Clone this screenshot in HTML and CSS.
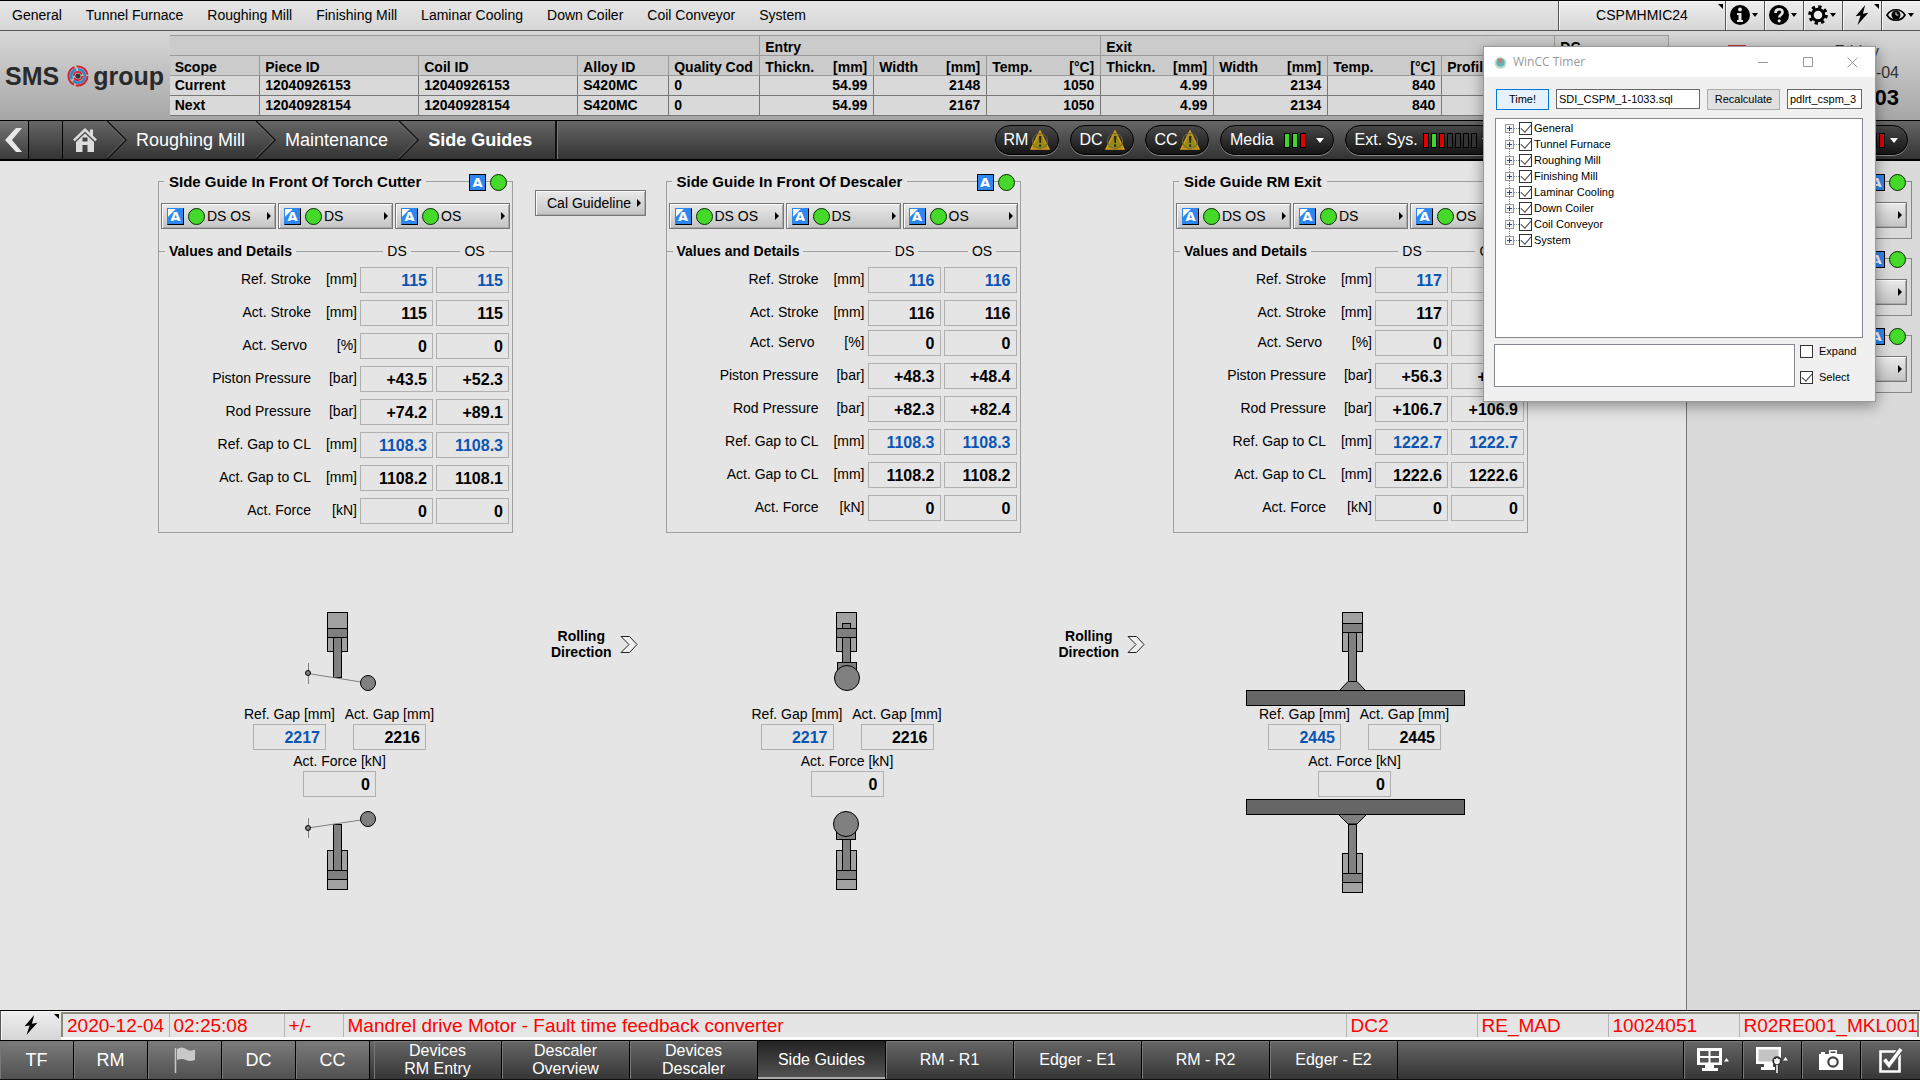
FILE: index.html
```html
<!DOCTYPE html>
<html lang="en">
<head>
<meta charset="utf-8">
<title>Side Guides</title>
<link rel="stylesheet" href="styles.css">
</head>
<body>
<svg class="defs" aria-hidden="true">
  <symbol id="warn" viewBox="0 0 20 20"><path d="M10 1 19 19H1Z" fill="#958c16" stroke="#e09a1c" stroke-width="1.4"/><circle cx="10" cy="11" r="7.5" fill="none" stroke="#6e6a3a"/><path d="M9 6h2.4l-.4 7H9.400Z M9 14.500h2.200v2.200H9Z" fill="#2c2a10"/></symbol>
  <symbol id="bolt" viewBox="0 0 16 22"><path d="M11.500 0 1 12.500 6.500 11.500 3 22 15 8.500 9 9.500Z" fill="#000"/></symbol>
  <symbol id="sep" viewBox="0 0 20 38"><path d="M0 0 19 19 0 38" fill="none" stroke="#111" stroke-width="1.500"/><path d="M-1.500 0 17.500 19-1.500 38" fill="none" stroke="#777" stroke-width=".8"/></symbol>
</svg>

<header class="menubar">
  <nav class="menu">
    <a href="#">General</a><a href="#">Tunnel Furnace</a><a href="#">Roughing Mill</a><a href="#">Finishing Mill</a><a href="#">Laminar Cooling</a><a href="#">Down Coiler</a><a href="#">Coil Conveyor</a><a href="#">System</a>
  </nav>
  <button class="tool station-name corner">CSPMHMIC24</button>
  <button class="tool drop" aria-label="Info"><svg width="20" height="20" viewBox="0 0 20 20"><circle cx="10" cy="10" r="10"/><circle cx="10" cy="4.500" r="1.900" fill="#e5e5e5"/><path d="M7 8h4.500v7H13v2H7v-2h1.500v-5H7Z" fill="#e5e5e5"/></svg></button>
  <button class="tool drop" aria-label="Help"><svg width="20" height="20" viewBox="0 0 20 20"><circle cx="10" cy="10" r="10"/><path d="M6.500 8C6.500 3 14 3.200 13.500 7.500 13.300 9.500 10.300 10 10.200 12.500" fill="none" stroke="#e5e5e5" stroke-width="2.600"/><circle cx="10.200" cy="15.800" r="1.600" fill="#e5e5e5"/></svg></button>
  <button class="tool drop" aria-label="Settings"><svg width="20" height="20" viewBox="0 0 20 20"><circle cx="10" cy="10" r="8.300" fill="none" stroke="#000" stroke-width="3" stroke-dasharray="3.260 3.260"/><circle cx="10" cy="10" r="5.800" fill="#eee" stroke="#000" stroke-width="3"/></svg></button>
  <button class="tool corner" aria-label="Alarms"><svg width="16" height="20"><use href="#bolt"/></svg></button>
  <button class="tool drop" aria-label="View"><svg width="20" height="16" viewBox="0 0 20 16"><path d="M1 8C5 1 15 1 19 8 15 15 5 15 1 8Z" fill="none" stroke="#000" stroke-width="1.700"/><circle cx="10" cy="8" r="4.500"/><path d="M10 5v3h2.500" fill="none" stroke="#ddd"/></svg></button>
</header>

<section class="product">
  <div class="logo"><span>SMS</span>
    <svg width="22" height="22" viewBox="0 0 22 22" fill="none"><circle cx="11" cy="11" r="9.500" stroke="#d6202c" stroke-width="2" stroke-dasharray="17 2 22 2 15 2"/><circle cx="11" cy="11" r="6.800" stroke="#2f86c6" stroke-width="2.600" stroke-dasharray="16 2 12 2"/><circle cx="11" cy="11" r="4.200" stroke="#d6202c" stroke-width="1.800" stroke-dasharray="11 2"/><circle cx="11" cy="11" r="2.600" fill="#333"/></svg>
    <span>group</span></div>
  <table class="pieces">
    <colgroup><col class="c90"><col class="c159"><col class="c159"><col class="c91"><col class="c91"><col class="c114"><col class="c113"><col class="c114"><col class="c113"><col class="c114"><col class="c114"><col class="c113"><col class="c114"></colgroup>
    <thead>
      <tr class="groups"><th colspan="5"></th><th colspan="3">Entry</th><th colspan="4">Exit</th><th>DC</th></tr>
      <tr><th>Scope</th><th>Piece ID</th><th>Coil ID</th><th>Alloy ID</th><th><div class="clip">Quality Code</div></th>
        <th><div class="pair"><span>Thickn.</span><span>[mm]</span></div></th><th><div class="pair"><span>Width</span><span>[mm]</span></div></th><th><div class="pair"><span>Temp.</span><span>[°C]</span></div></th>
        <th><div class="pair"><span>Thickn.</span><span>[mm]</span></div></th><th><div class="pair"><span>Width</span><span>[mm]</span></div></th><th><div class="pair"><span>Temp.</span><span>[°C]</span></div></th>
        <th>Profile</th><th></th></tr>
    </thead>
    <tbody>
      <tr><th>Current</th><td>12040926153</td><td>12040926153</td><td>S420MC</td><td>0</td><td class="num">54.99</td><td class="num">2148</td><td class="num">1050</td><td class="num">4.99</td><td class="num">2134</td><td class="num">840</td><td></td><td></td></tr>
      <tr><th>Next</th><td>12040928154</td><td>12040928154</td><td>S420MC</td><td>0</td><td class="num">54.99</td><td class="num">2167</td><td class="num">1050</td><td class="num">4.99</td><td class="num">2134</td><td class="num">840</td><td></td><td></td></tr>
    </tbody>
  </table>
  <div class="clock"><i class="flag"></i><div class="when"><div class="day">Friday</div><div class="date">2020-12-04</div><div class="time">:03</div></div></div>
</section>

<nav class="crumbs">
  <button class="back" aria-label="Back"><svg width="20" height="26" viewBox="0 0 20 26"><path d="M18 1H12L1 13 12 25H18L8 13Z" fill="#e8e8e8"/></svg></button>
  <span class="gap"></span>
  <a class="home" href="#" aria-label="Home"><svg width="26" height="26" viewBox="0 0 26 26" fill="#dcdcdc"><path d="M13 1 1 12.500 2.800 14.200 13 4.500 23.200 14.200 25 12.500 21 8.700V2.500H18V5.800Z"/><path d="M13 6.500 4 15V25H10.500V18H15.500V25H22V15Z"/><path d="M10.500 10.500h5v4h-5Z" fill="#444"/></svg></a>
  <svg class="sep" width="20" height="38"><use href="#sep"/></svg>
  <a href="#">Roughing Mill</a>
  <svg class="sep" width="20" height="38"><use href="#sep"/></svg>
  <a href="#">Maintenance</a>
  <svg class="sep" width="20" height="38"><use href="#sep"/></svg>
  <a href="#" class="here">Side Guides</a>
  <div class="status">
    <button class="pill">RM<svg width="20" height="20"><use href="#warn"/></svg></button>
    <button class="pill">DC<svg width="20" height="20"><use href="#warn"/></svg></button>
    <button class="pill">CC<svg width="20" height="20"><use href="#warn"/></svg></button>
    <button class="pill wide">Media<span class="bars"><i class="g"></i><i class="g"></i><i class="r"></i></span></button>
    <button class="pill wide">Ext. Sys.<span class="bars"><i class="r"></i><i class="g"></i><i class="r"></i><i></i><i></i><i></i><i></i></span></button>
    <button class="pill wide last" aria-label="Status"><span class="bars"><i class="r"></i><i class="r"></i><i class="r"></i></span></button>
  </div>
</nav>

<main class="screen">
  <div class="guides">
    <section class="panel">
      <header class="bar"><h2>SIde Guide In Front Of Torch Cutter</h2><span class="auto">A</span><i class="lamp"></i></header>
      <div class="modes"><button class="mode"><span class="auto cut">A</span><i class="lamp"></i>DS OS</button><button class="mode"><span class="auto cut">A</span><i class="lamp"></i>DS</button><button class="mode"><span class="auto cut">A</span><i class="lamp"></i>OS</button></div>
      <table class="values">
        <colgroup><col class="v-name"><col class="v-unit"><col class="v-ds"><col class="v-os"></colgroup>
        <thead><tr><th colspan="2"><span>Values and Details</span></th><th><span>DS</span></th><th><span>OS</span></th></tr></thead>
        <tbody>
          <tr class="ref"><th>Ref. Stroke</th><td>[mm]</td><td><output>115</output></td><td><output>115</output></td></tr>
          <tr><th>Act. Stroke</th><td>[mm]</td><td><output>115</output></td><td><output>115</output></td></tr>
          <tr><th>Act. Servo&nbsp;</th><td>[%]</td><td><output>0</output></td><td><output>0</output></td></tr>
          <tr><th>Piston Pressure</th><td>[bar]</td><td><output>+43.5</output></td><td><output>+52.3</output></td></tr>
          <tr><th>Rod Pressure</th><td>[bar]</td><td><output>+74.2</output></td><td><output>+89.1</output></td></tr>
          <tr class="ref"><th>Ref. Gap to CL</th><td>[mm]</td><td><output>1108.3</output></td><td><output>1108.3</output></td></tr>
          <tr><th>Act. Gap to CL</th><td>[mm]</td><td><output>1108.2</output></td><td><output>1108.1</output></td></tr>
          <tr><th>Act. Force</th><td>[kN]</td><td><output>0</output></td><td><output>0</output></td></tr>
        </tbody>
      </table>
    </section>
    <div class="between"><button class="mode cal">Cal Guideline</button></div>
    <section class="panel">
      <header class="bar"><h2>Side Guide In Front Of Descaler</h2><span class="auto">A</span><i class="lamp"></i></header>
      <div class="modes"><button class="mode"><span class="auto cut">A</span><i class="lamp"></i>DS OS</button><button class="mode"><span class="auto cut">A</span><i class="lamp"></i>DS</button><button class="mode"><span class="auto cut">A</span><i class="lamp"></i>OS</button></div>
      <table class="values">
        <colgroup><col class="v-name"><col class="v-unit"><col class="v-ds"><col class="v-os"></colgroup>
        <thead><tr><th colspan="2"><span>Values and Details</span></th><th><span>DS</span></th><th><span>OS</span></th></tr></thead>
        <tbody>
          <tr class="ref"><th>Ref. Stroke</th><td>[mm]</td><td><output>116</output></td><td><output>116</output></td></tr>
          <tr class="tight"><th>Act. Stroke</th><td>[mm]</td><td><output>116</output></td><td><output>116</output></td></tr>
          <tr><th>Act. Servo&nbsp;</th><td>[%]</td><td><output>0</output></td><td><output>0</output></td></tr>
          <tr><th>Piston Pressure</th><td>[bar]</td><td><output>+48.3</output></td><td><output>+48.4</output></td></tr>
          <tr><th>Rod Pressure</th><td>[bar]</td><td><output>+82.3</output></td><td><output>+82.4</output></td></tr>
          <tr class="ref"><th>Ref. Gap to CL</th><td>[mm]</td><td><output>1108.3</output></td><td><output>1108.3</output></td></tr>
          <tr><th>Act. Gap to CL</th><td>[mm]</td><td><output>1108.2</output></td><td><output>1108.2</output></td></tr>
          <tr><th>Act. Force</th><td>[kN]</td><td><output>0</output></td><td><output>0</output></td></tr>
        </tbody>
      </table>
    </section>
    <div class="between"></div>
    <section class="panel">
      <header class="bar"><h2>Side Guide RM Exit</h2><span class="auto">A</span><i class="lamp"></i></header>
      <div class="modes"><button class="mode"><span class="auto cut">A</span><i class="lamp"></i>DS OS</button><button class="mode"><span class="auto cut">A</span><i class="lamp"></i>DS</button><button class="mode"><span class="auto cut">A</span><i class="lamp"></i>OS</button></div>
      <table class="values">
        <colgroup><col class="v-name"><col class="v-unit"><col class="v-ds"><col class="v-os"></colgroup>
        <thead><tr><th colspan="2"><span>Values and Details</span></th><th><span>DS</span></th><th><span>OS</span></th></tr></thead>
        <tbody>
          <tr class="ref"><th>Ref. Stroke</th><td>[mm]</td><td><output>117</output></td><td><output></output></td></tr>
          <tr class="tight"><th>Act. Stroke</th><td>[mm]</td><td><output>117</output></td><td><output></output></td></tr>
          <tr><th>Act. Servo&nbsp;</th><td>[%]</td><td><output>0</output></td><td><output></output></td></tr>
          <tr><th>Piston Pressure</th><td>[bar]</td><td><output>+56.3</output></td><td><output>+56.5</output></td></tr>
          <tr><th>Rod Pressure</th><td>[bar]</td><td><output>+106.7</output></td><td><output>+106.9</output></td></tr>
          <tr class="ref"><th>Ref. Gap to CL</th><td>[mm]</td><td><output>1222.7</output></td><td><output>1222.7</output></td></tr>
          <tr><th>Act. Gap to CL</th><td>[mm]</td><td><output>1222.6</output></td><td><output>1222.6</output></td></tr>
          <tr><th>Act. Force</th><td>[kN]</td><td><output>0</output></td><td><output>0</output></td></tr>
        </tbody>
      </table>
    </section>

    <section class="rig">
      <svg width="355" height="96" viewBox="0 0 355 96" fill="#808080" stroke="#000" shape-rendering="crispEdges"><rect x="169.500" y="2.500" width="20" height="39" fill="#a2a2a2"/><rect x="169.500" y="18.500" width="20" height="9"/><rect x="175.500" y="27.500" width="8" height="40"/><path d="M150.500 53v21" stroke="#808080"/><g shape-rendering="auto"><path d="M150 63.500 203 72" stroke="#808080"/><circle cx="150" cy="63" r="2.500"/><circle cx="210" cy="73" r="7.500"/></g></svg>
      <div class="gaps"><div class="gap-box ref"><span>Ref. Gap [mm]</span><output>2217</output></div><div class="gap-box"><span>Act. Gap [mm]</span><output>2216</output></div></div>
      <div class="gap-box force"><span>Act. Force [kN]</span><output>0</output></div>
      <svg width="355" height="97" viewBox="0 0 355 97" fill="#808080" stroke="#000" shape-rendering="crispEdges"><rect x="169.500" y="53.500" width="20" height="39" fill="#a2a2a2"/><rect x="169.500" y="73.500" width="20" height="9"/><rect x="175.500" y="27.500" width="8" height="46"/><path d="M150.500 21v20" stroke="#808080"/><g shape-rendering="auto"><path d="M150 31 203 23" stroke="#808080"/><circle cx="150" cy="31" r="2.500"/><circle cx="210" cy="22" r="7.500"/></g></svg>
    </section>
    <div class="rolling"><p>Rolling<br>Direction</p><svg width="18" height="19" viewBox="0 0 18 19"><path d="M1 1.500h8.500L17 9.500 9.500 17.500H1L9 9.500Z" fill="#eee" stroke="#222"/></svg></div>
    <section class="rig">
      <svg width="355" height="96" viewBox="0 0 355 96" fill="#808080" stroke="#000" shape-rendering="crispEdges"><rect x="170.500" y="2.500" width="20" height="39" fill="#a2a2a2"/><rect x="176.500" y="13.500" width="8" height="5"/><rect x="170.500" y="18.500" width="20" height="9"/><rect x="176.500" y="27.500" width="8" height="25"/><rect x="171.500" y="52.500" width="19" height="10"/><circle cx="181" cy="68" r="12.500" shape-rendering="auto"/></svg>
      <div class="gaps"><div class="gap-box ref"><span>Ref. Gap [mm]</span><output>2217</output></div><div class="gap-box"><span>Act. Gap [mm]</span><output>2216</output></div></div>
      <div class="gap-box force"><span>Act. Force [kN]</span><output>0</output></div>
      <svg width="355" height="97" viewBox="0 0 355 97" fill="#808080" stroke="#000" shape-rendering="crispEdges"><rect x="170.500" y="53.500" width="20" height="39" fill="#a2a2a2"/><rect x="170.500" y="73.500" width="20" height="9"/><rect x="176.500" y="42.500" width="8" height="31"/><rect x="170.500" y="33.500" width="19" height="9"/><circle cx="180" cy="27" r="12.500" shape-rendering="auto"/></svg>
    </section>
    <div class="rolling"><p>Rolling<br>Direction</p><svg width="18" height="19" viewBox="0 0 18 19"><path d="M1 1.500h8.500L17 9.500 9.500 17.500H1L9 9.500Z" fill="#eee" stroke="#222"/></svg></div>
    <section class="rig">
      <svg width="355" height="96" viewBox="0 0 355 96" fill="#808080" stroke="#000" shape-rendering="crispEdges"><rect x="169.500" y="2.500" width="20" height="39" fill="#a2a2a2"/><rect x="169.500" y="13.500" width="20" height="9"/><rect x="175.500" y="22.500" width="8" height="49"/><path d="M166 81 175 71.500H184L193 81Z" shape-rendering="auto"/><rect x="73.500" y="80.500" width="218" height="15" fill="#666"/></svg>
      <div class="gaps"><div class="gap-box ref"><span>Ref. Gap [mm]</span><output>2445</output></div><div class="gap-box"><span>Act. Gap [mm]</span><output>2445</output></div></div>
      <div class="gap-box force"><span>Act. Force [kN]</span><output>0</output></div>
      <svg width="355" height="97" viewBox="0 0 355 97" fill="#808080" stroke="#000" shape-rendering="crispEdges"><path d="M165 17 175 27H184L194 17Z" shape-rendering="auto"/><rect x="73.500" y="2.500" width="218" height="15" fill="#666"/><rect x="169.500" y="56.500" width="20" height="39" fill="#a2a2a2"/><rect x="169.500" y="76.500" width="20" height="9"/><rect x="175.500" y="27.500" width="8" height="49"/></svg>
    </section>
  </div>
  <aside class="side">
    <section class="panel"><header class="bar"><span class="auto">A</span><i class="lamp"></i></header><button class="mode" aria-label="Open first group"></button></section>
    <section class="panel"><header class="bar"><span class="auto">A</span><i class="lamp"></i></header><button class="mode" aria-label="Open second group"></button></section>
    <section class="panel"><header class="bar"><span class="auto">A</span><i class="lamp"></i></header><button class="mode" aria-label="Open third group"></button></section>
  </aside>
</main>

<section class="alarm">
  <button class="tool corner" aria-label="Acknowledge"><svg width="16" height="20"><use href="#bolt"/></svg></button>
  <table>
    <colgroup><col class="a107"><col class="a115"><col class="a59"><col><col class="a131"><col class="a131"><col class="a131"><col class="a178"></colgroup>
    <tr><td>2020-12-04</td><td>02:25:08</td><td>+/-</td><td>Mandrel drive Motor - Fault time feedback converter</td><td>DC2</td><td>RE_MAD</td><td>10024051</td><td>R02RE001_MKL001</td></tr>
  </table>
</section>

<nav class="tabs">
  <button class="area">TF</button><button class="area">RM</button><button class="area" aria-label="Flag"><svg width="22" height="26" viewBox="0 0 22 26"><path d="M1.500 1v25" stroke="#c8c8c8" stroke-width="1.500"/><path d="M3 2Q8-1 12 2T21 2.500V13Q16 15 12 13T3 13Z" fill="#c8c8c8"/></svg></button><button class="area">DC</button><button class="area">CC</button>
  <button class="page first">Devices<br>RM Entry</button><button class="page">Descaler<br>Overview</button><button class="page">Devices<br>Descaler</button><button class="page on">Side Guides</button><button class="page">RM - R1</button><button class="page">Edger - E1</button><button class="page">RM - R2</button><button class="page">Edger - E2</button>
  <span class="fill"></span>
  <button class="act" aria-label="Windows"><svg width="34" height="26" viewBox="0 0 34 26"><path d="M1 1h25v17H1Z M9 18h9v3h4v3H6v-3h3Z" fill="#fff"/><path d="M4 4h8.500v5H4Z M14.500 4H23v5h-8.500Z M4 11h8.500v4.500H4Z M14.500 11H23v4.500h-8.500Z" fill="#555"/><path d="M28 14.500 30.500 11 33 14.500Z" fill="#fff"/></svg></button>
  <button class="act" aria-label="Screen service"><svg width="34" height="28" viewBox="0 0 34 28"><path d="M1 1h25v17H1Z M9 18h9v3h4v3H6v-3h3Z" fill="#fff"/><path d="M3.500 3.500h20v12h-20Z" fill="#c4c4c4"/><circle cx="22" cy="15" r="3.500" fill="none" stroke="#333" stroke-width="2.500"/><path d="M22 19v7" stroke="#333" stroke-width="4"/><path d="M22 12v3M22 19v8M20 13v3q2 3 4 0v-3" stroke="#fff" fill="none" stroke-width="1.500"/><path d="M28 14.500 30.500 11 33 14.500Z" fill="#fff"/></svg></button>
  <button class="act" aria-label="Camera"><svg width="26" height="22" viewBox="0 0 26 22"><path d="M1 5h2V3h4v2h4V1h8v4h6v16H1Z" fill="#fff"/><circle cx="15" cy="13" r="4.700" fill="none" stroke="#444" stroke-width="2.200"/><path d="M12.500 2.500h5v1.500h-5Z" fill="#444"/></svg></button>
  <button class="act" aria-label="Confirm"><svg width="26" height="26" viewBox="0 0 26 26"><path d="M2.500 4.500H21.500V24.500H2.500Z" fill="none" stroke="#fff" stroke-width="2.600"/><path d="M6 12 11 18 23 2" fill="none" stroke="#555" stroke-width="6"/><path d="M6.500 12.500 11 18 23 2" fill="none" stroke="#fff" stroke-width="3.600"/></svg></button>
</nav>

<div class="dialog" role="dialog" aria-label="WinCC Timer">
  <div class="title"><svg width="13" height="13" viewBox="0 0 13 13"><circle cx="6.500" cy="7" r="6" fill="#c9dccb"/><circle cx="6.500" cy="6.500" r="4.300" fill="#5bb5b8"/><path d="M3 2.500 8 3 7 8Z" fill="#d96b5b"/></svg><span>WinCC Timer</span>
    <button aria-label="Minimize"><svg width="10" height="10"><path d="M0 5.500h10" stroke="#999"/></svg></button><button aria-label="Maximize"><svg width="10" height="10"><path d="M.5.5h9v9h-9Z" fill="none" stroke="#999"/></svg></button><button aria-label="Close"><svg width="11" height="11"><path d="M.5.5l10 10M10.500.5l-10 10" stroke="#999"/></svg></button></div>
  <div class="dbody">
    <div class="drow"><button class="win default">Time!</button><input class="file" type="text" aria-label="File" value="SDI_CSPM_1-1033.sql"><button class="win calc">Recalculate</button><input class="host" type="text" aria-label="Server" value="pdlrt_cspm_3"></div>
    <ul class="tree">
      <li><button aria-label="Expand General"></button><label><input type="checkbox" checked>General</label></li>
      <li><button aria-label="Expand Tunnel Furnace"></button><label><input type="checkbox" checked>Tunnel Furnace</label></li>
      <li><button aria-label="Expand Roughing Mill"></button><label><input type="checkbox" checked>Roughing Mill</label></li>
      <li><button aria-label="Expand Finishing Mill"></button><label><input type="checkbox" checked>Finishing Mill</label></li>
      <li><button aria-label="Expand Laminar Cooling"></button><label><input type="checkbox" checked>Laminar Cooling</label></li>
      <li><button aria-label="Expand Down Coiler"></button><label><input type="checkbox" checked>Down Coiler</label></li>
      <li><button aria-label="Expand Coil Conveyor"></button><label><input type="checkbox" checked>Coil Conveyor</label></li>
      <li><button aria-label="Expand System"></button><label><input type="checkbox" checked>System</label></li>
    </ul>
    <div class="foot"><textarea aria-label="Output"></textarea><div class="opts"><label><input type="checkbox">Expand</label><label><input type="checkbox" checked>Select</label></div></div>
  </div>
</div>
</body>
</html>
```
FILE: styles.css
```css
* { box-sizing: border-box; }
body {
  margin: 0;
  min-height: 100vh;
  position: relative;
  display: flex;
  flex-direction: column;
  overflow-x: hidden;
  background: #e5e5e5;
  color: #000;
  font: 14px/16px "Liberation Sans", Arial, sans-serif;
}
button, input, textarea { font: inherit; color: inherit; margin: 0; padding: 0; border-radius: 0; }
a { color: inherit; text-decoration: none; }
h2, p, ul { margin: 0; padding: 0; }
h2 { font-size: 15px; line-height: 16px; }
svg { flex: none; display: block; }
.defs { display: none; }

/* menu bar */
.menubar {
  height: 31px;
  display: flex;
  border-top: 1px solid #000;
  border-bottom: 1px solid #555;
  background: linear-gradient(#e6e6e6, #d6d6d6);
}
.menu { flex: 1; display: flex; align-items: center; gap: 24px; padding-left: 12px; padding-bottom: 1px; white-space: nowrap; }
.tool {
  position: relative;
  width: 39px;
  display: flex;
  align-items: center;
  justify-content: center;
  padding-bottom: 1px;
  border: 0;
  border-left: 1px solid #555;
  box-shadow: inset 1px 1px #f6f6f6;
  background: linear-gradient(#eee, #d6d6d6);
}
.station-name { width: 167px; }
.drop { justify-content: flex-start; padding-left: 4px; }
.drop::after { content: ""; border: 3px solid transparent; border-top: 4px solid #000; border-bottom: 0; margin-left: 2px; }
.corner::after { content: ""; position: absolute; top: 3px; right: 2px; border-top: 5px solid #000; border-left: 5px solid transparent; }

/* product data */
.product { height: 89px; display: flex; background: linear-gradient(#d8d8d8, #a6a6a6); }
.logo { width: 170px; display: flex; align-items: center; gap: 4px; padding-left: 5px; font-size: 25px; font-weight: bold; color: #2a2a2a; }
.logo svg { margin-left: 4px; }
.pieces { width: calc(100% - 421px); align-self: flex-start; margin-top: 4px; table-layout: fixed; border-collapse: collapse; font-weight: bold; background: #d9d9d9; border-top: 1px solid #777; border-bottom: 1px solid #777; }
.pieces tr { height: 20px; }
.pieces th, .pieces td { padding: 0 6px 2px 5px; border: 1px solid #777; text-align: left; vertical-align: middle; white-space: nowrap; overflow: hidden; line-height: 16px; }
.pieces tr > :first-child { border-left: 0; }
.pieces thead th { padding-bottom: 0; background: #cbcbcb; border-color: #999; vertical-align: bottom; }
.pieces .num { text-align: right; }
.clip { overflow: hidden; }
.pair { display: flex; justify-content: space-between; }
.c90 { width: 90px; } .c91 { width: 91px; } .c113 { width: 113px; } .c114 { width: 114px; } .c159 { width: 159px; }
.clock { width: 251px; display: flex; justify-content: space-between; padding: 12px 21px 0 59px; }
.flag { width: 18px; height: 12px; margin-top: 2px; background: #c33; }
.when { text-align: right; color: #333; font-size: 16px; }
.day { line-height: 18px; padding-right: 20px; }
.date { line-height: 24px; }
.time { line-height: 26px; font-size: 22px; font-weight: bold; color: #000; }

/* breadcrumb bar */
.crumbs { height: 41px; display: flex; align-items: stretch; border-top: 1px solid #000; border-bottom: 2px solid #000; background: linear-gradient(#666, #333); color: #fff; font-size: 18px; white-space: nowrap; }
.crumbs a { display: flex; align-items: center; padding: 0 11px 0 9px; }
.crumbs .home { padding: 0 9px; border-left: 1px solid #000; }
.crumbs .here { font-weight: bold; padding-right: 23px; border-right: 2px solid #111; box-shadow: 1px 0 #777; }
.back { width: 29px; padding-left: 4px; border: 0; border-right: 1px solid #000; background: linear-gradient(#777, #3a3a3a); }
.gap { width: 33px; }
.status { width: 913px; margin: 4px 12px 0 auto; display: flex; align-items: flex-start; gap: 11px; font-size: 16px; }
.pill { height: 30px; width: 64px; display: flex; align-items: center; justify-content: center; gap: 2px; padding: 0; color: #fff; border: 1px solid #000; border-radius: 15px; background: linear-gradient(#484848, #151515); box-shadow: 0 1px #888; }
.pill.wide { width: auto; padding: 0 9px; gap: 10px; }
.pill.wide + .wide { gap: 5px; }
.pill.wide::after { content: ""; border: 4px solid transparent; border-top: 5px solid #fff; border-bottom: 0; }
.pill.last { margin-left: auto; }
.bars { display: flex; gap: 2px; }
.bars i { width: 6px; height: 15px; border: 1px solid #000; background: #333; }
.bars .g { background: #3fd52b; }
.bars .r { background: #e00000; }

/* main screen */
.screen { flex: 1; display: flex; }
.guides { flex: 1; display: grid; grid-template-columns: 355px 1fr 355px 1fr 355px; grid-template-rows: auto auto; align-content: start; row-gap: 77px; padding: 20px 158px; }
.panel { border: 1px solid #a0a0a0; background: #e5e5e5; }
.bar { display: flex; align-items: center; justify-content: flex-end; height: 18px; margin: -9px 5px 0; gap: 4px; }
.bar h2 { margin-right: auto; padding: 0 5px; background: #e5e5e5; white-space: nowrap; }
.auto { width: 17px; height: 17px; border: 1px solid #000; background: #2e86f0; color: #fff; font: bold 13px/15px "DejaVu Sans", sans-serif; text-align: center; }
.auto.cut { background: linear-gradient(135deg, #fff 5px, #2e86f0 6px); border-color: #2e86f0 #000 #000 #2e86f0; }
.lamp { width: 17px; height: 17px; border: 1px solid #0a2a05; border-radius: 50%; background: #45d92a; }
.modes { display: grid; grid-template-columns: repeat(3, 115px); gap: 2px; margin: 12px 2px 14px; }
.mode { position: relative; height: 26px; display: flex; align-items: center; gap: 4px; padding: 0 5px; border: 1px solid #777; box-shadow: inset 1px 1px #fafafa, inset -1px -1px #aaa; background: linear-gradient(#eaeaea, #c4c4c4); }
.mode .lamp { margin-right: -2px; }
.mode::after { content: ""; position: absolute; right: 4px; top: 8px; border: 4px solid transparent; border-left: 4px solid #000; border-right: 0; }
.cal { width: 111px; margin: 9px 0 0 22px; padding-left: 11px; }
.values { width: 100%; margin-bottom: 1px; table-layout: fixed; border-collapse: separate; border-spacing: 0; font-size: 14px; }
.v-unit { width: 46px; } .v-ds { width: 76px; } .v-os { width: 79px; }
.values th, .values td { padding: 0; font-weight: normal; text-align: right; vertical-align: top; white-space: nowrap; }
.values thead th { height: 24px; padding-left: 4px; text-align: center; background: linear-gradient(#a0a0a0, #a0a0a0) 0 8px / 100% 1px no-repeat; }
.values thead span { padding: 0 4px; background: #e5e5e5; }
.values thead th:first-child { text-align: left; font-weight: bold; padding-left: 6px; }
.values tbody tr { height: 33px; }
.values tbody tr.tight { height: 30px; }
.values tbody th, .values tbody td { line-height: 25px; }
output { display: block; width: 73px; height: 26px; border: 1px solid #b0b0b0; padding-right: 5px; font-size: 16px; line-height: 26px; font-weight: bold; text-align: right; }
.values output { margin-left: 3px; }
.ref output { color: #0a55b4; }

.rig { display: flex; flex-direction: column; align-items: flex-start; }
.gaps { display: flex; align-self: center; gap: 4px; margin-left: 8px; }
.gap-box { display: flex; flex-direction: column; align-items: center; gap: 2px; width: 96px; white-space: nowrap; }
.gap-box.force { align-self: center; margin-left: 8px; margin-top: 3px; }
.rolling { display: flex; justify-content: center; align-items: flex-start; gap: 8px; padding: 18px 0 0 10px; text-align: center; font-weight: bold; }
.rolling svg { margin-top: 7px; }

.side { width: 234px; border-left: 1px solid #777; background: #dadada; padding: 20px 8px; display: flex; flex-direction: column; gap: 19px; }
.side .panel { height: 58px; background: none; border-color: #888; }
.side .mode { width: calc(100% - 8px); margin: 11px 4px 0; }

/* alarm line */
.alarm { height: 30px; display: flex; border-top: 1px solid #000; background: #f6f6f6; }
.alarm .tool { width: 61px; }
.alarm table { width: calc(100% - 62px); margin: 1px 1px 1px 0; table-layout: fixed; border-collapse: collapse; border: 2px solid #8c887a; background: #e5e5e5; color: #f00; font-size: 19px; line-height: 20px; }
.alarm td { padding: 0 0 0 4px; border-right: 1px solid #b5b5b5; border-bottom: 2px solid #fff; white-space: nowrap; overflow: hidden; }
.a107 { width: 107px; } .a115 { width: 115px; } .a59 { width: 59px; } .a131 { width: 131px; } .a178 { width: 179px; }

/* bottom bar */
.tabs { height: 40px; display: flex; border-top: 1px solid #000; border-bottom: 1px solid #111; background: linear-gradient(#666, #333); color: #fff; }
.tabs button { display: flex; align-items: center; justify-content: center; border: 0; border-right: 1px solid #000; box-shadow: inset 1px 1px #777; background: linear-gradient(#666, #363636); text-align: center; }
.tabs .area { width: 74px; font-size: 18px; background: linear-gradient(#7c7c7c, #505050); }
.tabs .page { width: 128px; font-size: 16px; line-height: 18px; }
.tabs .first { margin-left: 4px; }
.tabs .on { background: linear-gradient(#222, #555); box-shadow: inset 0 -2px #aaa; }
.tabs .act { width: 59px; }
.tabs .act:last-child { border-right: 0; }
.fill { flex: 1; border-right: 1px solid #000; }

/* floating window */
.dialog { position: absolute; top: 46px; right: 44px; width: 393px; height: 356px; border: 1px solid #999; background: #f0f0f0; box-shadow: 0 4px 14px rgba(0, 0, 0, .4); font-size: 11px; line-height: 13px; }
.title { height: 30px; display: flex; align-items: center; padding-left: 10px; background: #fff; color: #999; font: 12px/16px "Open Sans", sans-serif; }
.title span { margin: 0 auto 0 6px; }
.title button { width: 45px; display: flex; justify-content: center; border: 0; background: none; }
.dbody { padding: 12px 12px 0 11px; }
.drow { display: flex; gap: 7px; padding-left: 1px; }
.win { height: 21px; border: 1px solid #adadad; background: #e1e1e1; }
.win.default { width: 53px; border-color: #0078d7; background: #e5f1fb; }
.calc { width: 73px; }
.drow input { height: 20px; border: 1px solid #666; background: #fff; padding: 0 2px; }
.file { width: 144px; }
.host { width: 75px; }
.tree { list-style: none; height: 220px; margin-top: 8px; padding: 1px 0 0 9px; border: 1px solid #828790; background: #fff; }
.tree li { height: 16px; display: flex; align-items: center; }
.tree li button { position: relative; width: 9px; height: 9px; border: 1px solid #999; background: linear-gradient(#2a4a9a, #2a4a9a) 1px 3px / 5px 1px no-repeat, linear-gradient(#2a4a9a, #2a4a9a) 3px 1px / 1px 5px no-repeat, #f4f4f4; }
.tree li button::after { content: ""; position: absolute; left: 8px; top: 3px; width: 5px; border-top: 1px dotted #888; }
.tree li + li button::before { content: ""; position: absolute; left: 3px; top: -8px; height: 7px; border-left: 1px dotted #888; }
.tree label { display: flex; align-items: center; gap: 2px; margin-left: 5px; }
.dialog input[type=checkbox] { appearance: none; position: relative; width: 13px; height: 13px; border: 1px solid #333; background: #fff; }
.dialog input:checked::after { content: ""; position: absolute; left: 3px; top: -1px; width: 5px; height: 9px; border: solid #444; border-width: 0 1px 1px 0; transform: rotate(42deg); }
.foot { display: flex; gap: 5px; margin: 6px 0 0 -1px; }
.foot textarea { width: 301px; height: 43px; resize: none; border: 1px solid #828790; background: #fff; }
.opts { display: flex; flex-direction: column; gap: 13px; padding-top: 1px; }
.opts label { display: flex; align-items: center; gap: 6px; }
```
